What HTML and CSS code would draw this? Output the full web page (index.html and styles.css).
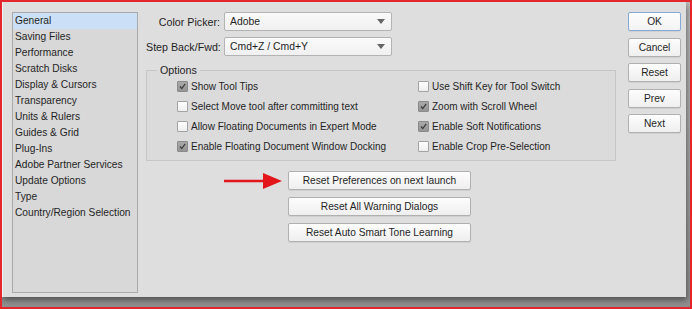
FILE: index.html
```html
<!DOCTYPE html>
<html lang="en">
<head>
    <meta charset="UTF-8">
    <meta name="viewport" content="width=device-width, initial-scale=1.0">
    <title>Preferences</title>
    <link rel="stylesheet" href="styles.css">
</head>
<body>
    <div class="frame">
        <div class="dialog">
            <ul class="categories">
                <li class="selected">General</li>
                <li>Saving Files</li>
                <li>Performance</li>
                <li>Scratch Disks</li>
                <li>Display &amp; Cursors</li>
                <li>Transparency</li>
                <li>Units &amp; Rulers</li>
                <li>Guides &amp; Grid</li>
                <li>Plug-Ins</li>
                <li>Adobe Partner Services</li>
                <li>Update Options</li>
                <li>Type</li>
                <li>Country/Region Selection</li>
            </ul>

            <div class="main">
                <div class="field-row">
                    <label>Color Picker:</label>
                    <div class="select"><span>Adobe</span><span class="caret"></span></div>
                </div>
                <div class="field-row">
                    <label>Step Back/Fwd:</label>
                    <div class="select"><span>Cmd+Z / Cmd+Y</span><span class="caret"></span></div>
                </div>

                <fieldset class="options">
                    <legend>Options</legend>
                    <div class="option-grid">
                        <label class="check"><span class="box checked"><svg viewBox="0 0 11 11"><path d="M2.5 5.5 L4.6 8 L8.8 2.2"/></svg></span>Show Tool Tips</label>
                        <label class="check"><span class="box"></span>Use Shift Key for Tool Switch</label>
                        <label class="check"><span class="box"></span>Select Move tool after committing text</label>
                        <label class="check"><span class="box checked"><svg viewBox="0 0 11 11"><path d="M2.5 5.5 L4.6 8 L8.8 2.2"/></svg></span>Zoom with Scroll Wheel</label>
                        <label class="check"><span class="box"></span>Allow Floating Documents in Expert Mode</label>
                        <label class="check"><span class="box checked"><svg viewBox="0 0 11 11"><path d="M2.5 5.5 L4.6 8 L8.8 2.2"/></svg></span>Enable Soft Notifications</label>
                        <label class="check"><span class="box checked"><svg viewBox="0 0 11 11"><path d="M2.5 5.5 L4.6 8 L8.8 2.2"/></svg></span>Enable Floating Document Window Docking</label>
                        <label class="check"><span class="box"></span>Enable Crop Pre-Selection</label>
                    </div>
                </fieldset>

                <div class="reset-buttons">
                    <div class="reset-row">
                        <svg class="arrow" viewBox="0 0 58 18"><path d="M0 9 H44" /><polygon points="39,1 58,9 39,17"/></svg>
                        <button class="btn wide">Reset Preferences on next launch</button>
                    </div>
                    <button class="btn wide">Reset All Warning Dialogs</button>
                    <button class="btn wide">Reset Auto Smart Tone Learning</button>
                </div>
            </div>

            <div class="actions">
                <button class="btn default">OK</button>
                <button class="btn">Cancel</button>
                <button class="btn">Reset</button>
                <button class="btn">Prev</button>
                <button class="btn">Next</button>
            </div>
        </div>
    </div>
</body>
</html>
```

FILE: styles.css
```css
body {
    margin: 0;
    font-family: "Liberation Sans", Arial, sans-serif;
    font-size: 10px;
    color: #1f1f1f;
}
.frame {
    width: 692px;
    height: 309px;
    box-sizing: border-box;
    border: 2px solid #e2262b;
    background: linear-gradient(#bdbdbd, #8f8f8f);
    overflow: hidden;
}
.dialog {
    display: flex;
    width: 684px;
    height: 295px;
    box-sizing: border-box;
    padding: 10px 0 4px 9px;
    background-color: #dedede;
    border-left: 1px solid #f2f2f2;
    box-shadow: 1px 3px 6px rgba(0,0,0,0.45);
}
.categories {
    list-style: none;
    margin: 0;
    padding: 0;
    width: 126px;
    box-sizing: border-box;
    border: 1px solid #a9a9a9;
    background-color: #d8d8d8;
}
.categories li {
    line-height: 16px;
    padding-left: 2px;
    white-space: nowrap;
    font-size: 10.2px;
}
.categories li.selected {
    background-color: #cbe0f6;
}
.main {
    width: 470px;
    margin-left: 8px;
}
.field-row {
    display: flex;
    align-items: center;
    height: 19px;
    margin-bottom: 6px;
}
.field-row label {
    width: 74px;
    text-align: right;
    margin-right: 4px;
    white-space: nowrap;
    font-size: 10.7px;
}
.select {
    display: flex;
    align-items: center;
    justify-content: space-between;
    width: 168px;
    height: 19px;
    box-sizing: border-box;
    padding: 0 6px 0 5px;
    border: 1px solid #b3b3b3;
    border-radius: 2px;
    background: linear-gradient(#fafafa, #f0f0f0);
    font-size: 10.4px;
}
.caret {
    width: 0;
    height: 0;
    border-left: 4px solid transparent;
    border-right: 4px solid transparent;
    border-top: 5px solid #666;
}
.options {
    margin: 8px 0 0;
    padding: 0 0 4px 30px;
    border: 1px solid #c6c6c6;
    background-color: #dbdbdb;
}
.options legend {
    margin-left: -20px;
    padding: 0 3px;
    line-height: 12px;
    font-size: 10.7px;
}
.option-grid {
    display: grid;
    grid-template-columns: 241px 1fr;
    grid-auto-rows: 20px;
}
.check {
    display: flex;
    align-items: center;
    white-space: nowrap;
}
.box {
    width: 11px;
    height: 11px;
    box-sizing: border-box;
    margin-right: 3px;
    border: 1px solid #a2a2a2;
    border-radius: 1px;
    background: linear-gradient(#fdfdfd, #efefef);
}
.box.checked {
    border-color: #8a8a8a;
    background: linear-gradient(#a9a9a9, #959595);
}
.box svg {
    display: block;
    width: 9px;
    height: 9px;
}
.box path {
    fill: none;
    stroke: #3b3b3b;
    stroke-width: 1.5;
}
.btn {
    font-family: inherit;
    font-size: 10.2px;
    color: #1f1f1f;
    height: 19px;
    padding: 0;
    border: 1px solid #b0b0b0;
    border-radius: 2px;
    background: linear-gradient(#fdfdfd, #efefef);
    box-shadow: 0 1px 0 rgba(0,0,0,0.06);
}
.reset-buttons {
    display: flex;
    flex-direction: column;
    align-items: center;
    gap: 7px;
    margin-top: 10px;
    padding-right: 3px;
}
.reset-row {
    position: relative;
}
.btn.wide {
    display: block;
    width: 183px;
}
.arrow {
    position: absolute;
    right: calc(100% + 6px);
    top: 1px;
    width: 58px;
    height: 18px;
}
.arrow path {
    stroke: #e3161b;
    stroke-width: 2.4;
}
.arrow polygon {
    fill: #e3161b;
}
.actions {
    display: flex;
    flex-direction: column;
    gap: 6.5px;
    margin-left: 12px;
    width: 53px;
}
.actions .btn {
    width: 53px;
}
.btn.default {
    border-color: #84a9d6;
    background: linear-gradient(#fdfdfd, #f3f3f3);
}
```
